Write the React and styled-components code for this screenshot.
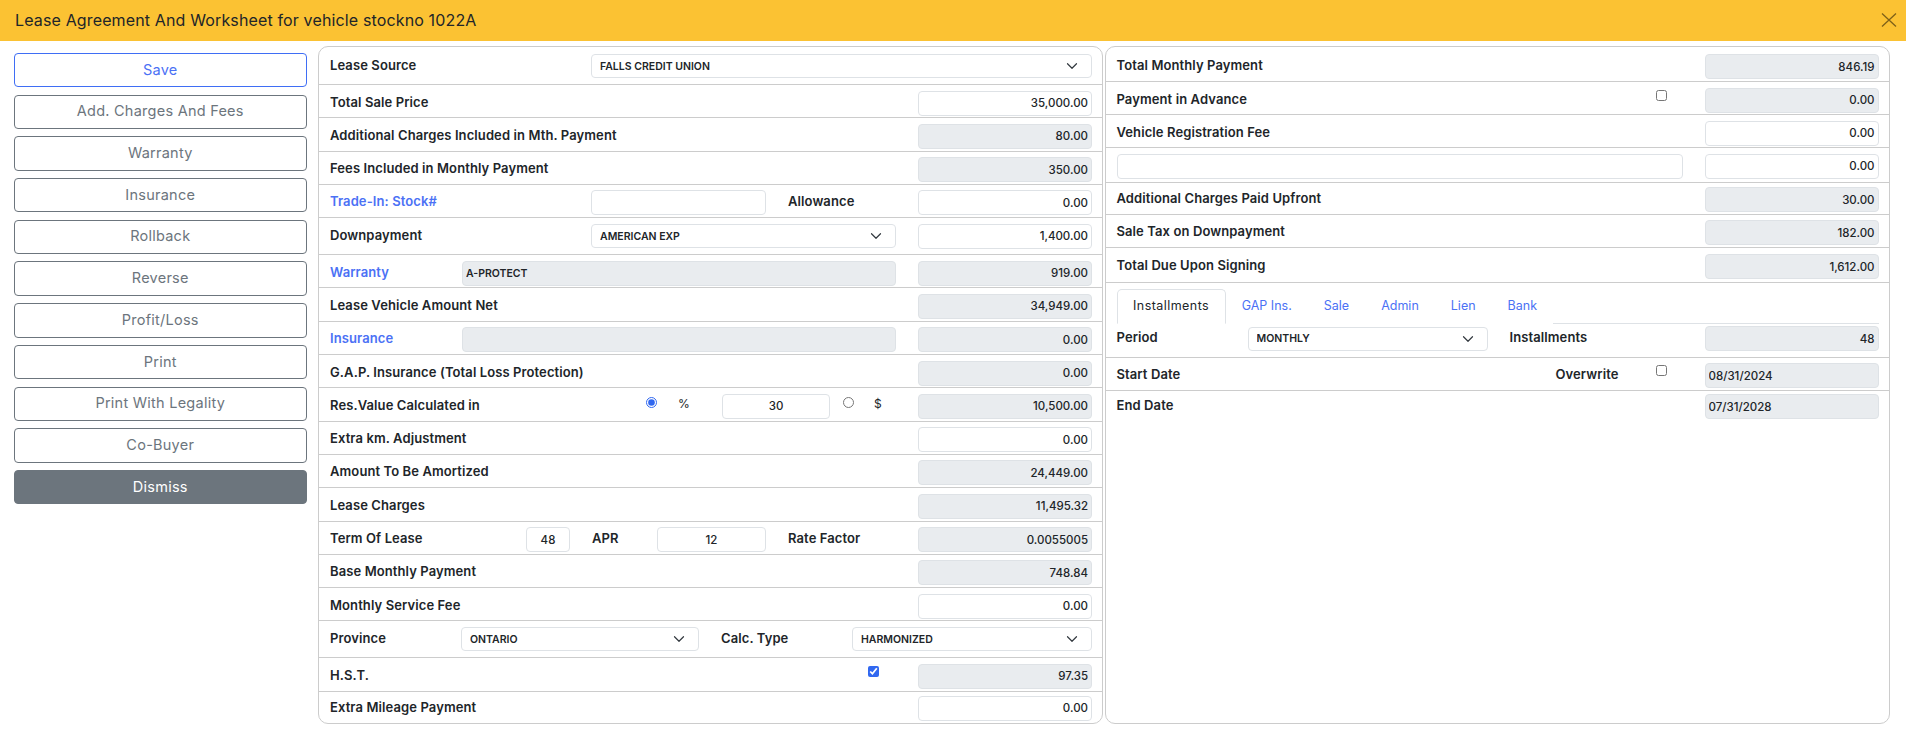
import React from 'react'
import styled, { createGlobalStyle } from 'styled-components'

const GlobalStyle = createGlobalStyle`
  html, body {
    margin: 0;
    padding: 0;
    background: #fff;
    font-family: Inter, "Open Sans", "Liberation Sans", sans-serif;
  }
  * {
    box-sizing: border-box;
  }
`

const chevron = "data:image/svg+xml,%3csvg xmlns='http://www.w3.org/2000/svg' viewBox='0 0 16 16'%3e%3cpath fill='none' stroke='%23343a40' stroke-linecap='round' stroke-linejoin='round' stroke-width='1.6' d='m2 5 6 6 6-6'/%3e%3c/svg%3e"

const Page = styled.div`
  width: 1906px;
  height: 754px;
  overflow: hidden;
`

const Header = styled.header`
  height: 41px;
  background: #fbc233;
  display: flex;
  align-items: center;
  justify-content: space-between;
  padding: 0 9px 2px 15px;
`

const Title = styled.h5`
  margin: 0;
  font-size: 16px;
  font-weight: 400;
  letter-spacing: 0.14px;
  color: #212529;
`

const CloseButton = styled.button`
  border: 0;
  padding: 0;
  background: none;
  display: flex;
  color: #7e6119;
`

const Body = styled.div`
  display: flex;
  align-items: flex-start;
  padding: 5px 16px 0 14px;
`

const Sidebar = styled.nav`
  width: 292.5px;
  margin: 7px 11.5px 0 0;
  display: flex;
  flex-direction: column;
  gap: 7.3px;
`

const ActionButton = styled.button`
  height: 34.4px;
  border-radius: 4px;
  border: 1px solid ${p => (p.$primary ? '#3f6ef5' : '#6c757d')};
  background: ${p => (p.$dark ? '#6c757d' : '#fff')};
  color: ${p => (p.$dark ? '#fff' : p.$primary ? '#4b71f5' : '#6c757d')};
  font-family: inherit;
  font-size: 14.5px;
  font-weight: 400;
  letter-spacing: 0.25px;
  padding: 0 0 2px;
`

const Panels = styled.div`
  display: flex;
  gap: 1.5px;
`

const Panel = styled.section`
  width: 785px;
  height: 678px;
  border: 1px solid #ccc;
  border-radius: 10px;
  overflow: hidden;
`

const Row = styled.div`
  height: ${p => p.$h || 33.3}px;
  padding: ${p => (p.$pt === undefined ? 5.5 : p.$pt)}px 10px 0 11px;
  display: grid;
  grid-template-columns: ${p => p.$cols || '1fr 174px'};
  column-gap: ${p => (p.$gap === undefined ? 22 : p.$gap)}px;
  align-items: start;
  border-bottom: ${p => (p.$last ? '0' : '1px solid #ccc')};
`

const Label = styled.label`
  font-size: 13px;
  line-height: 22px;
  font-weight: 600;
  letter-spacing: 0.1px;
  white-space: nowrap;
  color: ${p => (p.$link ? '#4b71f5' : '#212529')};
`

const Field = styled.input`
  width: 100%;
  height: 25px;
  border: 1px solid #dee2e6;
  border-radius: 4px;
  padding: 0 3px;
  outline: 0;
  background: ${p => (p.readOnly ? '#e9ecef' : '#fff')};
  color: #212529;
  font-family: inherit;
  font-size: ${p => (p.$caps ? 10.5 : 11.5)}px;
  font-weight: ${p => (p.$caps ? 600 : 500)};
  text-align: ${p => p.$align || 'right'};
`

const Select = styled.select`
  width: 100%;
  height: 24px;
  margin-top: 0.5px;
  border: 1px solid #dee2e6;
  border-radius: 4px;
  padding: 0 30px 0 8px;
  appearance: none;
  background: #fff url("${chevron}") no-repeat right 13px center / 12px 12px;
  color: #212529;
  font-family: inherit;
  font-size: 10.5px;
  font-weight: 600;
`

const Check = styled.input`
  width: 11px;
  height: 11px;
  margin: 2px 0 0;
  accent-color: #3168f0;
`

const Radio = styled.input`
  width: 11px;
  height: 11px;
  margin: 3px 0 0 ${p => p.$ml || 0}px;
  accent-color: #3168f0;
`

const Unit = styled.span`
  font-size: 12px;
  font-weight: 400;
  line-height: 20px;
  color: #212529;
`

const TabArea = styled.div`
  padding: 6px 10px 0 11px;
`

const TabBar = styled.div`
  display: flex;
  height: 35px;
  border-bottom: 1px solid #dee2e6;
`

const Tab = styled.button`
  height: 35px;
  padding: 0 ${p => (p.$active ? 15.5 : 15)}px 2px;
  border: 1px solid ${p => (p.$active ? '#dee2e6' : 'transparent')};
  border-bottom-color: ${p => (p.$active ? '#fff' : 'transparent')};
  border-radius: 5px 5px 0 0;
  background: #fff;
  color: ${p => (p.$active ? '#212529' : '#4b71f5')};
  font-family: inherit;
  font-size: 12.5px;
  font-weight: 400;
  letter-spacing: ${p => (p.$active ? 0.45 : 0)}px;
`

const Close = () => (
  <svg width="16" height="16" viewBox="0 0 16 16" fill="none" stroke="currentColor" strokeWidth="1.3">
    <path d="M1 1.5 15 14.5M15 1.5 1 14.5" />
  </svg>
)

const actions = ['Add. Charges And Fees', 'Warranty', 'Insurance', 'Rollback', 'Reverse', 'Profit/Loss', 'Print', 'Print With Legality', 'Co-Buyer']
const tabs = ['Installments', 'GAP Ins.', 'Sale', 'Admin', 'Lien', 'Bank']

const Amount = ({ label, value, link, readOnly = true, h, pt }) => (
  <Row $h={h} $pt={pt}>
    <Label $link={link}>{label}</Label>
    <Field readOnly={readOnly} defaultValue={value} />
  </Row>
)

export default function App () {
  return (
    <Page>
      <GlobalStyle />
      <Header>
        <Title>Lease Agreement And Worksheet for vehicle stockno 1022A</Title>
        <CloseButton><Close /></CloseButton>
      </Header>
      <Body>
        <Sidebar>
          <ActionButton $primary>Save</ActionButton>
          {actions.map(a => <ActionButton key={a}>{a}</ActionButton>)}
          <ActionButton $dark>Dismiss</ActionButton>
        </Sidebar>
        <Panels>
          <Panel>
            <Row $h={38} $pt={6.5} $cols="239px 501px">
              <Label>Lease Source</Label>
              <Select><option>FALLS CREDIT UNION</option></Select>
            </Row>
            <Amount label="Total Sale Price" value="35,000.00" readOnly={false} />
            <Amount label="Additional Charges Included in Mth. Payment" value="80.00" />
            <Amount label="Fees Included in Monthly Payment" value="350.00" />
            <Row $cols="239px 175px 108px 174px">
              <Label $link>Trade-In: Stock#</Label>
              <Field />
              <Label>Allowance</Label>
              <Field defaultValue="0.00" />
            </Row>
            <Row $h={37} $cols="239px 305px 174px">
              <Label>Downpayment</Label>
              <Select><option>AMERICAN EXP</option></Select>
              <Field defaultValue="1,400.00" />
            </Row>
            <Row $cols="110px 434px 174px">
              <Label $link>Warranty</Label>
              <Field readOnly $caps $align="left" defaultValue="A-PROTECT" />
              <Field readOnly defaultValue="919.00" />
            </Row>
            <Amount label="Lease Vehicle Amount Net" value="34,949.00" />
            <Row $cols="110px 434px 174px">
              <Label $link>Insurance</Label>
              <Field readOnly />
              <Field readOnly defaultValue="0.00" />
            </Row>
            <Amount label="G.A.P. Insurance (Total Loss Protection)" value="0.00" />
            <Row $gap={0} $cols="316px 32px 44px 108px 44px 44px 174px">
              <Label>Res.Value Calculated in</Label>
              <Radio type="radio" name="res" defaultChecked />
              <Unit>%</Unit>
              <Field $align="center" defaultValue="30" />
              <Radio type="radio" name="res" $ml={13} />
              <Unit>$</Unit>
              <Field readOnly defaultValue="10,500.00" />
            </Row>
            <Amount label="Extra km. Adjustment" value="0.00" readOnly={false} />
            <Amount label="Amount To Be Amortized" value="24,449.00" />
            <Amount label="Lease Charges" value="11,495.32" />
            <Row $cols="174px 44px 43px 109px 108px 174px">
              <Label>Term Of Lease</Label>
              <Field $align="center" defaultValue="48" />
              <Label>APR</Label>
              <Field $align="center" defaultValue="12" />
              <Label>Rate Factor</Label>
              <Field readOnly defaultValue="0.0055005" />
            </Row>
            <Amount label="Base Monthly Payment" value="748.84" />
            <Amount label="Monthly Service Fee" value="0.00" readOnly={false} />
            <Row $h={37} $cols="109px 238px 109px 240px">
              <Label>Province</Label>
              <Select><option>ONTARIO</option></Select>
              <Label>Calc. Type</Label>
              <Select><option>HARMONIZED</option></Select>
            </Row>
            <Row $gap={0} $cols="1fr 50px 174px">
              <Label>H.S.T.</Label>
              <Check type="checkbox" defaultChecked />
              <Field readOnly defaultValue="97.35" />
            </Row>
            <Row $last $pt={4}>
              <Label>Extra Mileage Payment</Label>
              <Field defaultValue="0.00" />
            </Row>
          </Panel>
          <Panel>
            <Amount label="Total Monthly Payment" value="846.19" h={35} pt={7} />
            <Row $h={33} $gap={0} $cols="1fr 49px 174px">
              <Label>Payment in Advance</Label>
              <Check type="checkbox" />
              <Field readOnly defaultValue="0.00" />
            </Row>
            <Amount label="Vehicle Registration Fee" value="0.00" readOnly={false} h={33} />
            <Row $h={35}>
              <Field $align="left" />
              <Field defaultValue="0.00" />
            </Row>
            <Amount label="Additional Charges Paid Upfront" value="30.00" h={32} pt={4} />
            <Amount label="Sale Tax on Downpayment" value="182.00" h={33} pt={5} />
            <Amount label="Total Due Upon Signing" value="1,612.00" h={35} pt={6} />
            <TabArea>
              <TabBar>
                {tabs.map((t, i) => <Tab key={t} $active={i === 0}>{t}</Tab>)}
              </TabBar>
            </TabArea>
            <Row $h={34} $pt={2} $cols="109px 240px 173px 174px">
              <Label>Period</Label>
              <Select><option>MONTHLY</option></Select>
              <Label>Installments</Label>
              <Field readOnly defaultValue="48" />
            </Row>
            <Row $h={33} $pt={5} $gap={0} $cols="439px 100px 49px 174px">
              <Label>Start Date</Label>
              <Label>Overwrite</Label>
              <Check type="checkbox" />
              <Field readOnly $align="left" defaultValue="08/31/2024" />
            </Row>
            <Row $pt={3} $last>
              <Label>End Date</Label>
              <Field readOnly $align="left" defaultValue="07/31/2028" />
            </Row>
          </Panel>
        </Panels>
      </Body>
    </Page>
  )
}
